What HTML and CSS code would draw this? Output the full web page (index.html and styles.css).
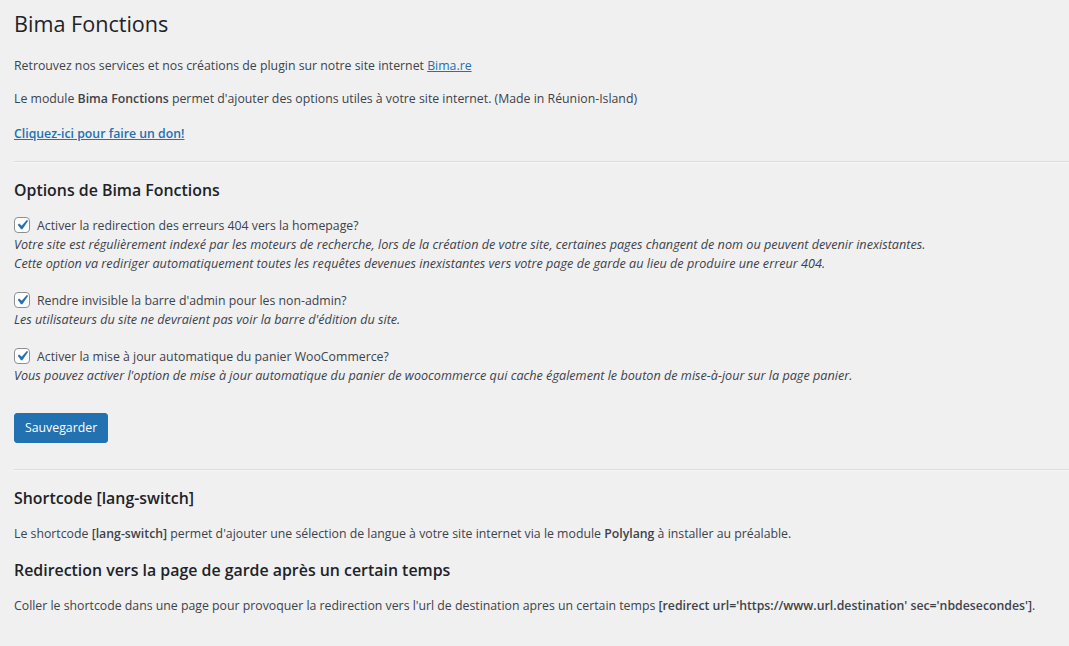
FILE: index.html
```html
<!DOCTYPE html>
<html lang="fr">
<head>
<meta charset="utf-8">
<title>Bima Fonctions</title>
<link rel="stylesheet" href="styles.css">
</head>
<body>
<div class="wrap">
  <h1 class="page-title">Bima Fonctions</h1>
  <p class="intro">Retrouvez nos services et nos créations de plugin sur notre site internet <a href="#">Bima.re</a></p>
  <p class="intro">Le module <strong>Bima Fonctions</strong> permet d'ajouter des options utiles à votre site internet. (Made in Réunion-Island)</p>
  <p class="donate"><a href="#"><strong>Cliquez-ici pour faire un don!</strong></a></p>
  <hr class="sep">
  <h2 class="section-title first">Options de Bima Fonctions</h2>
  <form class="options">
    <div class="option">
      <label class="opt-label"><span class="cb"><svg viewBox="0 0 20 20" width="20" height="20"><path d="M14.83 4.89l1.34.94-5.81 8.38H9.02L5.78 9.67l1.34-1.25 2.57 2.4z"/></svg></span>Activer la redirection des erreurs 404 vers la homepage?</label>
      <p class="desc">Votre site est régulièrement indexé par les moteurs de recherche, lors de la création de votre site, certaines pages changent de nom ou peuvent devenir inexistantes.<br>Cette option va rediriger automatiquement toutes les requêtes devenues inexistantes vers votre page de garde au lieu de produire une erreur 404.</p>
    </div>
    <div class="option">
      <label class="opt-label"><span class="cb"><svg viewBox="0 0 20 20" width="20" height="20"><path d="M14.83 4.89l1.34.94-5.81 8.38H9.02L5.78 9.67l1.34-1.25 2.57 2.4z"/></svg></span>Rendre invisible la barre d'admin pour les non-admin?</label>
      <p class="desc">Les utilisateurs du site ne devraient pas voir la barre d'édition du site.</p>
    </div>
    <div class="option">
      <label class="opt-label"><span class="cb"><svg viewBox="0 0 20 20" width="20" height="20"><path d="M14.83 4.89l1.34.94-5.81 8.38H9.02L5.78 9.67l1.34-1.25 2.57 2.4z"/></svg></span>Activer la mise à jour automatique du panier WooCommerce?</label>
      <p class="desc">Vous pouvez activer l'option de mise à jour automatique du panier de woocommerce qui cache également le bouton de mise-à-jour sur la page panier.</p>
    </div>
    <div class="submit-row"><button type="button" class="button-primary">Sauvegarder</button></div>
  </form>
  <hr class="sep sep2">
  <h2 class="section-title">Shortcode [lang-switch]</h2>
  <p class="text">Le shortcode <strong>[lang-switch]</strong> permet d'ajouter une sélection de langue à votre site internet via le module <strong>Polylang</strong> à installer au préalable.</p>
  <h2 class="section-title second">Redirection vers la page de garde après un certain temps</h2>
  <p class="text">Coller le shortcode dans une page pour provoquer la redirection vers l'url de destination apres un certain temps <strong>[redirect url='https://www.url.destination' sec='nbdesecondes']</strong>.</p>
</div>
</body>
</html>
```

FILE: styles.css
```css
html, body {
  margin: 0;
  padding: 0;
  background: #f0f0f1;
}
body {
  font-family: "Open Sans", "Noto Sans", sans-serif;
  font-size: 12.3px;
  line-height: 19.5px;
  color: #3c434a;
}
.wrap {
  padding: 0 0 0 14px;
}
.page-title {
  font-size: 21.6px;
  font-weight: 400;
  line-height: 30px;
  margin: 0;
  padding: 9px 0 4px;
  color: #1d2327;
}
p {
  margin: 0;
}
.intro {
  margin-top: 13px;
}
.donate {
  margin-top: 16px;
}
strong {
  font-weight: 600;
}
a {
  color: #2271b1;
  text-decoration: underline;
}
.sep {
  border: 0;
  border-top: 1px solid #dcdcde;
  border-bottom: 1px solid #f6f7f7;
  margin: 17px 0 0;
  height: 0;
}
.section-title {
  font-size: 15.9px;
  font-weight: 600;
  line-height: 22px;
  color: #1d2327;
  margin: 16px 0 0;
}
.options {
  margin-top: 15px;
}
.option {
  margin-bottom: 18px;
}
.opt-label {
  display: flex;
  align-items: center;
  line-height: 19px;
}
.cb {
  width: 16px;
  height: 16px;
  box-sizing: border-box;
  border: 1px solid #8c8f94;
  border-radius: 4px;
  background: #fff;
  margin-right: 7px;
  position: relative;
  flex: none;
}
.cb svg {
  position: absolute;
  left: -3px;
  top: -3px;
  fill: #2271b1;
}
.desc {
  font-style: italic;
  font-size: 12.65px;
  line-height: 19px;
}
.submit-row {
  padding-top: 10px;
}
.button-primary {
  font-family: inherit;
  font-size: 12.3px;
  line-height: 28px;
  height: 30px;
  padding: 0 10px;
  background: #2271b1;
  border: 1px solid #2271b1;
  border-radius: 3px;
  color: #fff;
  cursor: pointer;
}
.sep2 {
  margin-top: 26px;
}
.text {
  margin-top: 15px;
}
.second {
  margin-top: 16px;
}
```
